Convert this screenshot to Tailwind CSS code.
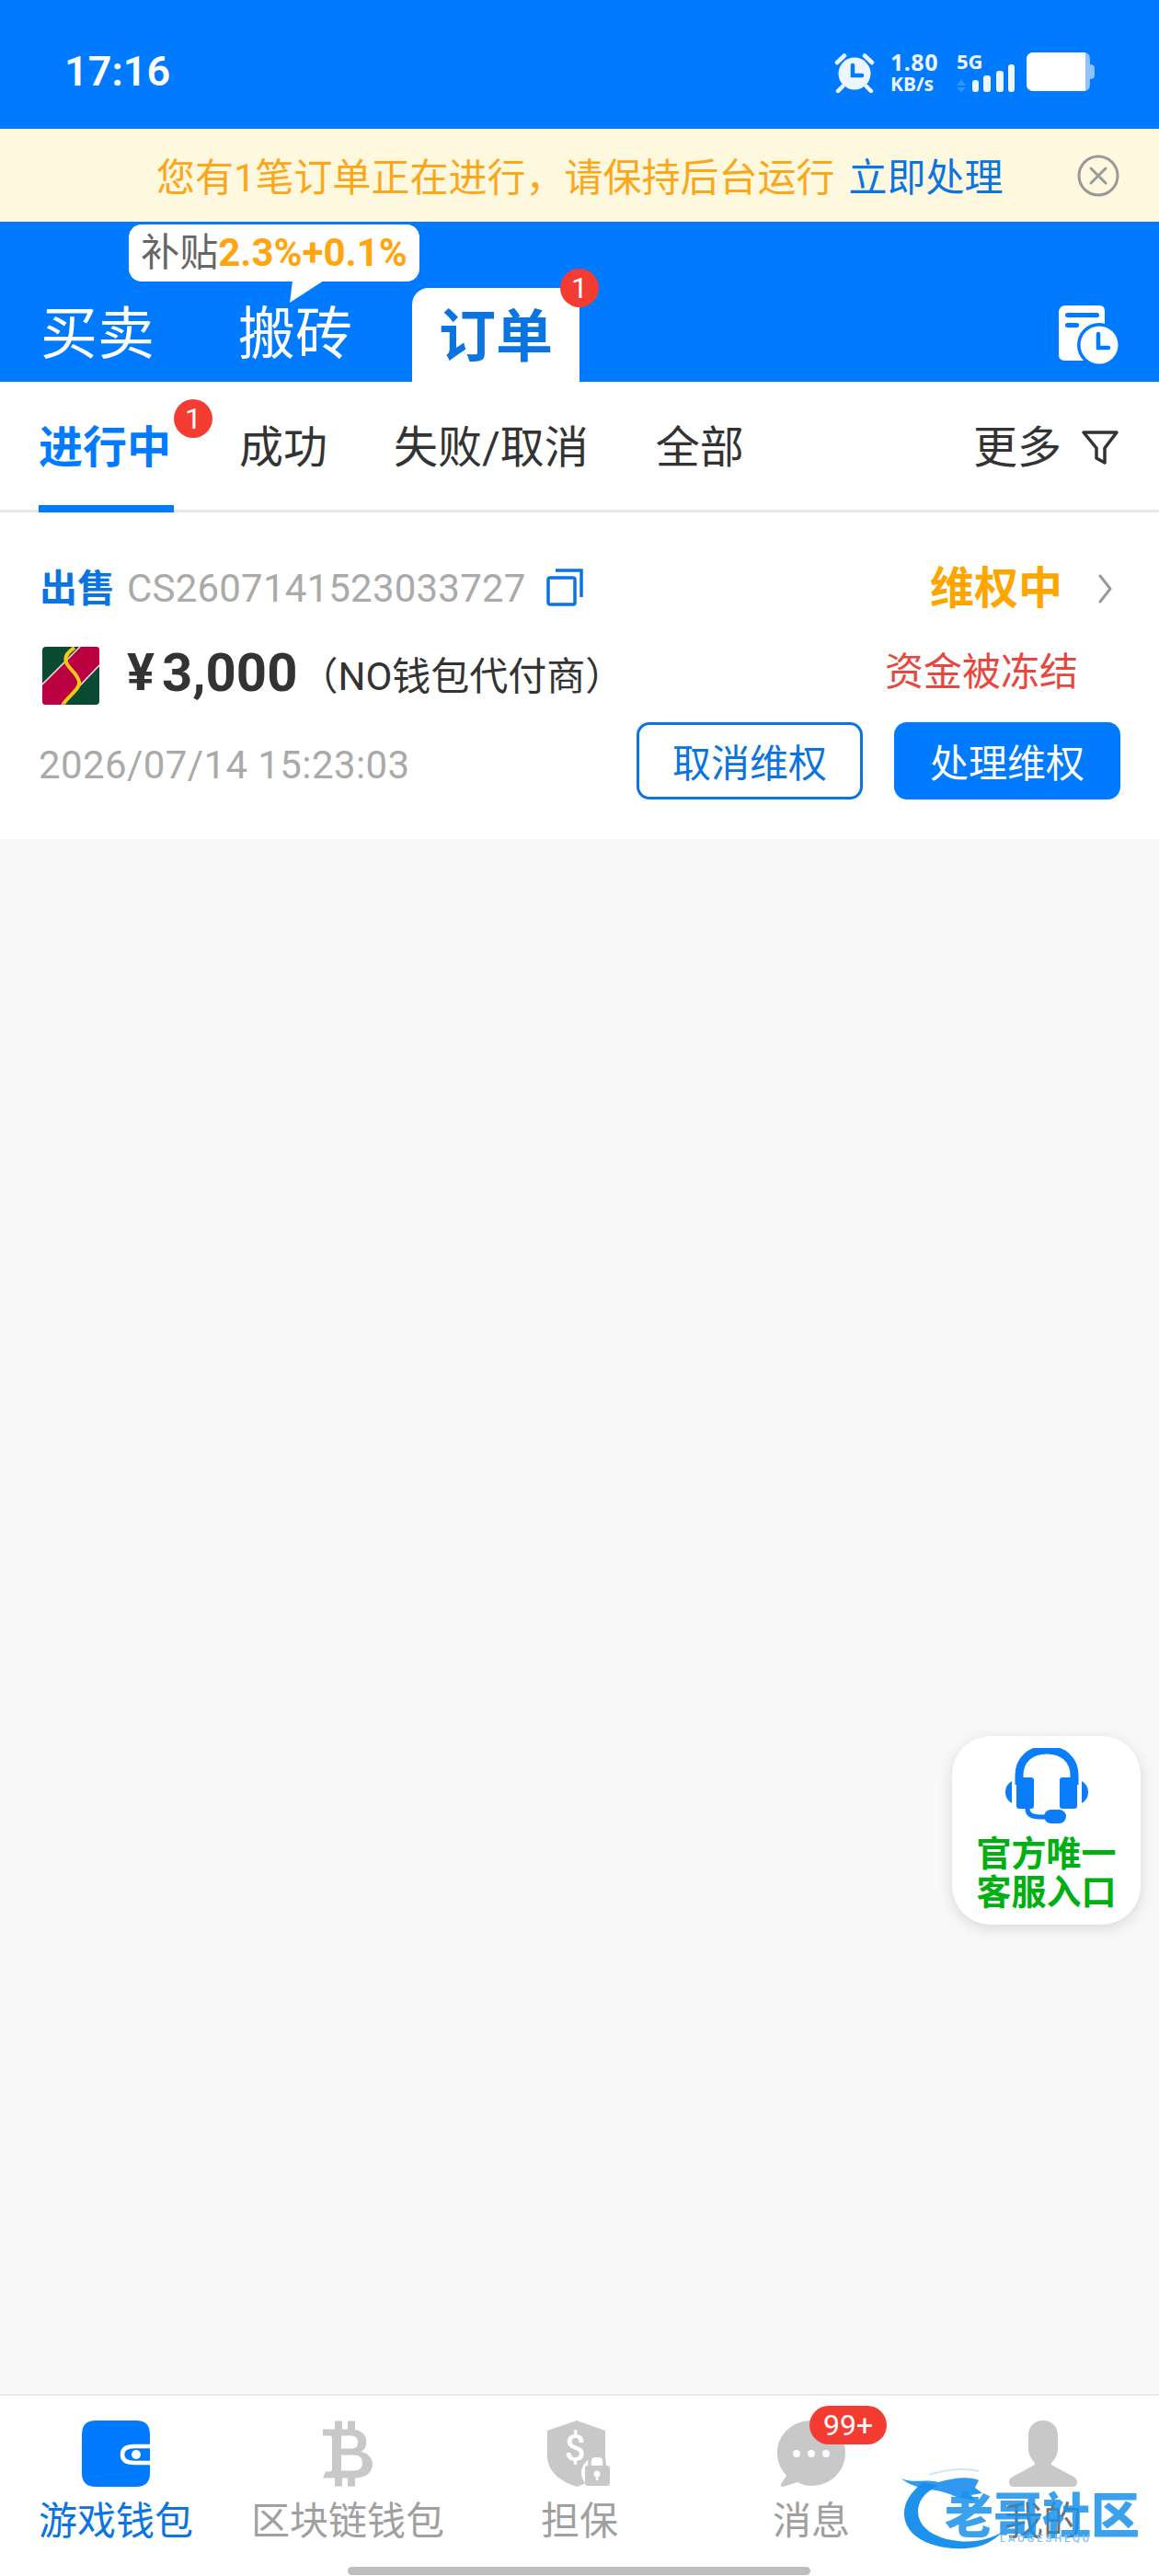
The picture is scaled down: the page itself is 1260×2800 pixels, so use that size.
<!DOCTYPE html>
<html lang="zh-CN">
<head>
  <meta charset="UTF-8" />
  <meta name="viewport" content="width=device-width, initial-scale=1.0" />
  <title>订单</title>
  <script src="https://cdn.jsdelivr.net/npm/@tailwindcss/browser@4"></script>
</head>
<body class="font-['Roboto','Noto_Sans_CJK_SC',sans-serif] bg-[#f8f8f8]">
<div class="relative w-[1260px] h-[2800px] flex flex-col overflow-hidden">

  <!-- Status bar -->
  <div class="h-[140px] shrink-0 bg-[#007aff] flex items-start justify-between pt-[57px] pl-[70px] pr-[70px] text-white">
    <span class="text-[45px] font-semibold leading-[42px]">17:16</span>
    <div class="flex items-start">
      <svg class="w-[44px] h-[44px] text-[#eef5ff]" viewBox="0 0 44 44" fill="currentColor">
        <circle cx="22" cy="23" r="17.5"/>
        <path d="M3 11 L11 3.5" stroke="currentColor" stroke-width="4.5" stroke-linecap="round"/>
        <path d="M41 11 L33 3.5" stroke="currentColor" stroke-width="4.5" stroke-linecap="round"/>
        <path d="M9 37 L4 42" stroke="currentColor" stroke-width="4.5" stroke-linecap="round"/>
        <path d="M35 37 L40 42" stroke="currentColor" stroke-width="4.5" stroke-linecap="round"/>
        <path d="M20 14 V25 H30" fill="none" stroke="#007aff" stroke-width="4.5" stroke-linecap="round"/>
      </svg>
      <div class="ml-[17px] w-[56px] flex flex-col text-[#eef5ff] font-['Noto_Sans'] font-bold">
        <span class="text-[25px] leading-[20px] tracking-[0.5px]">1.80</span>
        <span class="text-[21px] leading-[20px] mt-[4px]">KB/s</span>
      </div>
      <div class="ml-[16px] relative w-[64px] h-[44px]">
        <span class="absolute left-0 top-0 text-[22px] leading-[18px] font-bold font-['Noto_Sans'] text-[#eef5ff]">5G</span>
        <svg class="absolute left-0 top-0 w-[64px] h-[44px]" viewBox="0 0 64 44">
          <path d="M0 36 L5 29 L10 36 Z M0 38 H10 L5 43 Z" fill="#2f95ff"/>
          <rect x="17" y="30" width="7" height="13" rx="3" fill="#eef5ff"/>
          <rect x="29" y="25" width="8" height="18" rx="3" fill="#eef5ff"/>
          <rect x="43" y="20" width="8" height="23" rx="3" fill="#eef5ff"/>
          <rect x="56" y="13" width="7" height="30" rx="3" fill="#eef5ff"/>
        </svg>
      </div>
      <svg class="ml-[12px] w-[74px] h-[42px]" viewBox="0 0 74 42">
        <path d="M8 0 H62 Q69 0 69 8 V13 Q74 13 74 17 V25 Q74 29 69 29 V34 Q69 42 62 42 H8 Q0 42 0 34 V8 Q0 0 8 0 Z" fill="#8fc2ff"/>
        <path d="M8 0 H64 V42 H8 Q0 42 0 34 V8 Q0 0 8 0 Z" fill="#fff"/>
      </svg>
    </div>
  </div>

  <!-- Notice -->
  <div class="h-[101px] shrink-0 bg-[#fef9de] flex items-center pl-[170px] pr-[43px]">
    <span class="mt-[6px] text-[42px] leading-none text-[#fba71b] whitespace-nowrap">您有1笔订单正在进行&#xFF0C;请保持后台运行</span>
    <span class="mt-[6px] ml-[15px] text-[42px] leading-none text-[#0a74e0] whitespace-nowrap">立即处理</span>
    <svg class="ml-auto w-[46px] h-[46px]" viewBox="0 0 46 46" fill="none" stroke="#999" stroke-width="3">
      <circle cx="23" cy="23" r="21"/>
      <path d="M15 15 L31 31 M31 15 L15 31" stroke-linecap="round"/>
    </svg>
  </div>

  <!-- Top tabs -->
  <div class="relative h-[174px] shrink-0 bg-[#007aff] flex items-end pl-[44px] pr-[43px]">
    <span class="text-[62px] leading-none text-white mb-[20px]">买卖</span>
    <span class="ml-[91px] text-[62px] leading-none text-white mb-[20px]">搬砖</span>
    <div class="relative ml-[65px] w-[182px] h-[102px] bg-white rounded-t-[18px] flex items-center justify-center">
      <span class="text-[62px] font-bold leading-none text-[#0a74e0] mt-[5px]">订单</span>
      <span class="absolute -top-[21px] -right-[21px] w-[42px] h-[42px] rounded-full bg-[#f43c32] text-white text-[32px] leading-[42px] text-center">1</span>
    </div>
    <svg class="ml-auto mb-[17px] w-[66px] h-[66px]" viewBox="0 0 66 66">
      <path d="M8 0 H44 Q50 0 50 6 V54 Q50 60 44 60 H8 Q0 60 0 54 V8 Q0 0 8 0 Z" fill="#fff"/>
      <rect x="7" y="8" width="37" height="5" rx="2.5" fill="#007aff"/>
      <rect x="7" y="19" width="15" height="5" rx="2.5" fill="#007aff"/>
      <circle cx="44" cy="43" r="24" fill="#007aff"/>
      <circle cx="44" cy="43" r="20.5" fill="#fff"/>
      <path d="M43 31 V46 H54" fill="none" stroke="#007aff" stroke-width="4.5" stroke-linecap="round"/>
    </svg>
    <!-- subsidy bubble -->
    <div class="absolute left-[140px] top-[3px]">
      <div class="w-[316px] h-[62px] bg-white rounded-[14px] flex items-center justify-center whitespace-nowrap">
        <span class="text-[42px] leading-none text-[#666]">补贴</span><span class="text-[42px] leading-none font-bold text-[#ffa50f]">2.3%+0.1%</span>
      </div>
      <svg class="absolute left-[172px] top-[61px] w-[40px] h-[24px]" viewBox="0 0 40 24"><path d="M6 0 H40 L3 24 Z" fill="#fff"/></svg>
    </div>
  </div>

  <!-- Order status tabs -->
  <div class="h-[142px] shrink-0 bg-white border-b-[3px] border-[#e8e8e8] flex items-start pl-[42px] pr-[44px] text-[#333]">
    <div class="relative h-[142px] w-[147px] border-b-[8px] border-[#007aff] pt-[48px]">
      <span class="text-[48px] font-bold leading-none text-[#007aff] whitespace-nowrap">进行中</span>
      <span class="absolute top-[19px] -right-[42px] w-[42px] h-[42px] rounded-full bg-[#f43c32] text-white text-[32px] leading-[42px] text-center">1</span>
    </div>
    <span class="ml-[71px] mt-[48px] text-[48px] leading-none">成功</span>
    <span class="ml-[72px] mt-[48px] text-[48px] leading-none whitespace-nowrap">失败/取消</span>
    <span class="ml-[73px] mt-[48px] text-[48px] leading-none">全部</span>
    <span class="ml-auto mt-[48px] text-[48px] leading-none">更多</span>
    <svg class="ml-[22px] mt-[52px] w-[40px] h-[40px]" viewBox="0 0 40 40" fill="none" stroke="#333" stroke-width="3.5" stroke-linejoin="round">
      <path d="M2 3 H38 L25 20 V36 L16 31 V20 Z"/>
    </svg>
  </div>

  <!-- Order card -->
  <div class="h-[355px] shrink-0 bg-white px-[42px] pt-[57px]">
    <div class="h-[52px] flex items-center">
      <span class="text-[41px] font-bold leading-none text-[#0a74e0] ml-[1px]">出售</span>
      <span class="ml-[13px] text-[42px] leading-none text-[#aaa] tracking-[0.2px]">CS2607141523033727</span>
      <svg class="ml-[22px] -mt-[4px] w-[40px] h-[42px]" viewBox="0 0 40 42" fill="none" stroke="#0a74e0" stroke-width="3.5">
        <rect x="2" y="11" width="29" height="29" rx="2"/>
        <path d="M10 3 H38 V32"/>
      </svg>
      <span class="ml-auto text-[48px] font-bold leading-none text-[#ffa500]">维权中</span>
      <svg class="ml-[38px] mr-[8px] w-[17px] h-[32px]" viewBox="0 0 17 32" fill="none" stroke="#999" stroke-width="3" stroke-linecap="round" stroke-linejoin="round">
        <path d="M3 2 L14 16 L3 30"/>
      </svg>
    </div>
    <div class="mt-[32px] h-[66px] flex items-center">
      <svg class="ml-[4px] mt-[6px] w-[62px] h-[63px]" viewBox="0 0 62 63">
        <rect width="62" height="63" rx="4" fill="#0a4a32"/>
        <path d="M41 0 H58 Q62 0 62 4 V20 L21 63 H4 Q0 63 0 59 V41 Z" fill="#bb0042"/>
        <path d="M41 0 L0 41 M62 20 L21 63" stroke="#f4d3d8" stroke-width="1.6" fill="none"/>
        <path d="M35 1 C27 6 23 12 27 19 C31 26 38 29 40 38 C41 46 30 52 23 62" fill="none" stroke="#f7c815" stroke-width="4"/>
      </svg>
      <span class="ml-[30px] text-[56px] font-bold leading-none text-[#333]">¥</span>
      <span class="ml-[8px] text-[58px] font-bold leading-none text-[#333]">3,000</span>
      <span class="ml-[2px] mt-[10px] text-[42px] leading-none text-[#333] whitespace-nowrap">&#xFF08;NO钱包代付商&#xFF09;</span>
      <span class="ml-auto mr-[46px] text-[42px] leading-none text-[#e8473f] whitespace-nowrap">资金被冻结</span>
    </div>
    <div class="mt-[21px] flex items-center">
      <span class="mt-[10px] text-[42px] leading-none text-[#aaa] tracking-[0.4px]">2026/07/14 15:23:03</span>
      <button class="ml-auto w-[246px] h-[84px] border-[3px] border-[#0a74e0] rounded-[14px] pt-[8px] text-[42px] leading-none text-[#0a74e0] bg-white">取消维权</button>
      <button class="ml-[34px] w-[246px] h-[84px] rounded-[14px] pt-[8px] text-[42px] leading-none text-white bg-[#007aff]">处理维权</button>
    </div>
  </div>

  <div class="flex-1"></div>

  <!-- Floating customer service -->
  <div class="absolute left-[1035px] top-[1887px] w-[205px] h-[205px] bg-white rounded-[42px] shadow-[0_4px_16px_rgba(0,0,0,0.13)] flex flex-col items-center pt-[13px]">
    <svg class="w-[90px] h-[82px]" viewBox="0 0 90 82">
      <path d="M15 40 V30 C15 12 28 2 45 2 C62 2 75 12 75 30 V40" fill="none" stroke="#0a7dfa" stroke-width="9"/>
      <rect x="12" y="32" width="19" height="34" rx="3" fill="#0a7dfa"/>
      <rect x="59" y="32" width="19" height="34" rx="3" fill="#0a7dfa"/>
      <path d="M7 36 V60 Q0 56 0 48 Q0 40 7 36 Z M83 36 V60 Q90 56 90 48 Q90 40 83 36 Z" fill="#0a7dfa"/>
      <path d="M24 66 Q24 75 38 75 H48" fill="none" stroke="#0a7dfa" stroke-width="5"/>
      <rect x="42" y="67" width="24" height="15" rx="7.5" fill="#0a7dfa"/>
    </svg>
    <span class="mt-[11px] text-[38px] font-bold leading-[44px] text-[#00b010] whitespace-nowrap">官方唯一</span>
    <span class="text-[38px] font-bold leading-[41px] text-[#00b010] whitespace-nowrap">客服入口</span>
  </div>

  <!-- Bottom nav -->
  <div class="h-[198px] shrink-0 bg-white border-t-[2px] border-[#e8e8e8] grid grid-cols-5 pt-[27px]">
    <div class="flex flex-col items-center">
      <svg class="w-[76px] h-[72px]" viewBox="0 0 76 72">
        <path d="M16 0 H60 Q75 0 75 15 V57 Q75 72 60 72 H16 Q1 72 1 57 V15 Q1 0 16 0 Z" fill="#007aff"/>
        <path d="M75 28 H58 Q45 28 45 37 Q45 46 58 46 H75" fill="#007aff" stroke="#fff" stroke-width="4.5"/>
        <circle cx="60" cy="37" r="5" fill="#fff"/>
      </svg>
      <span class="mt-[16px] text-[42px] leading-[44px] text-[#0a74e0] whitespace-nowrap">游戏钱包</span>
    </div>
    <div class="flex flex-col items-center">
      <svg class="w-[54px] h-[72px]" viewBox="0 0 54 71" fill="#c8c8c8">
        <path fill-rule="evenodd" d="M0 9 H13 V0 H21 V9 H27 V0 H35 V9.5 C44 11 48 17 47 24 C47 28 45 32 41 33 C49 35 54 40 54 47 C54 56 46 62 35 62 V71 H27 V62 H21 V71 H13 V62 H0 L3 55 H7 Q10 55 10 52 V19 Q10 16 7 16 H0 Z M20 16 V30 H31 Q38 30 38 23 Q38 16 31 16 Z M20 37 V54 H34 Q43 54 43 45.5 Q43 37 34 37 Z"/>
      </svg>
      <span class="mt-[16px] text-[42px] leading-[44px] text-[#a0a0a0] whitespace-nowrap">区块链钱包</span>
    </div>
    <div class="flex flex-col items-center">
      <svg class="w-[70px] h-[72px]" viewBox="0 0 70 72">
        <path d="M32 0 L63 11 V40 C63 56 50 66 32 72 C14 66 0 56 0 38 V11 Z" fill="#c8c8c8"/>
        <text x="30" y="44" text-anchor="middle" font-family="Roboto" font-size="40" font-weight="500" fill="#fff">$</text>
        <circle cx="54" cy="57" r="17" fill="#fff"/>
        <path d="M46 50 V45 Q46 37 54 37 Q62 37 62 45 V50" fill="none" stroke="#c8c8c8" stroke-width="3.5"/>
        <rect x="41" y="49" width="27" height="22" rx="3" fill="#c8c8c8"/>
        <circle cx="54" cy="58" r="3.5" fill="#fff"/>
        <rect x="52.8" y="59" width="2.6" height="6" fill="#fff"/>
      </svg>
      <span class="mt-[16px] text-[42px] leading-[44px] text-[#a0a0a0]">担保</span>
    </div>
    <div class="relative flex flex-col items-center">
      <svg class="w-[74px] h-[72px]" viewBox="0 0 74 72">
        <path d="M37 0 C57 0 74 15 74 35 C74 56 57 71 37 71 C31 71 26 69 22 67 L6 72 Q3 72 4 69 L10 60 C4 53 0 45 0 35 C0 15 17 0 37 0 Z" fill="#c8c8c8"/>
        <circle cx="21" cy="36" r="4" fill="#fff"/><circle cx="37" cy="36" r="4" fill="#fff"/><circle cx="53" cy="36" r="4" fill="#fff"/>
      </svg>
      <span class="mt-[16px] text-[42px] leading-[44px] text-[#a0a0a0]">消息</span>
      <span class="absolute left-[124px] -top-[16px] w-[84px] h-[42px] rounded-[21px] bg-[#f43c32] text-white text-[32px] leading-[42px] text-center">99+</span>
    </div>
    <div class="flex flex-col items-center">
      <svg class="w-[74px] h-[72px]" viewBox="0 0 74 72" fill="#c8c8c8">
        <path d="M37 0 C46 0 53 6 53 16 V30 C53 37 50 42 46 46 V48 L70 61 Q74 63 74 67 Q74 72 69 72 H5 Q0 72 0 67 Q0 63 4 61 L28 48 V46 C24 42 21 37 21 30 V16 C21 6 28 0 37 0 Z"/>
      </svg>
      <span class="mt-[16px] text-[42px] leading-[44px] text-[#707070]">我的</span>
    </div>
  </div>

  <!-- Home indicator -->
  <div class="absolute left-[378px] bottom-[1px] w-[503px] h-[9px] rounded-full bg-[#bdbdbd]"></div>

  <!-- Watermark -->
  <div class="absolute left-[980px] top-[2682px] w-[262px] h-[92px]">
    <svg class="absolute left-0 top-0 w-[262px] h-[92px]" viewBox="0 0 262 92">
      <path d="M24 16 C8 28 0 42 4 58 C10 80 42 90 70 88 C88 87 100 80 110 70 C96 78 80 82 62 80 C38 78 18 66 18 48 C18 36 26 26 40 20 Z" fill="#1d92ea"/>
      <path d="M0 12 C14 18 24 12 40 16 C60 10 76 10 84 14 L80 22 L88 28 L76 30 L80 36 L60 32 C46 26 38 24 24 24 C16 20 6 18 0 12 Z" fill="#1a8df0" opacity="0.9"/>
      <path d="M30 8 C48 2 70 0 84 4" fill="none" stroke="#cfe6fa" stroke-width="2"/>
    </svg>
    <span class="absolute left-[47px] top-[28px] text-[53px] font-black leading-none text-[#1a90ea]/85 whitespace-nowrap">老哥社区</span>
    <span class="absolute left-[107px] top-[72px] text-[11px] font-medium leading-none tracking-[3px] text-[#7fbfee] whitespace-nowrap">LAOGESHEQU</span>
  </div>
</div>
</body>
</html>
